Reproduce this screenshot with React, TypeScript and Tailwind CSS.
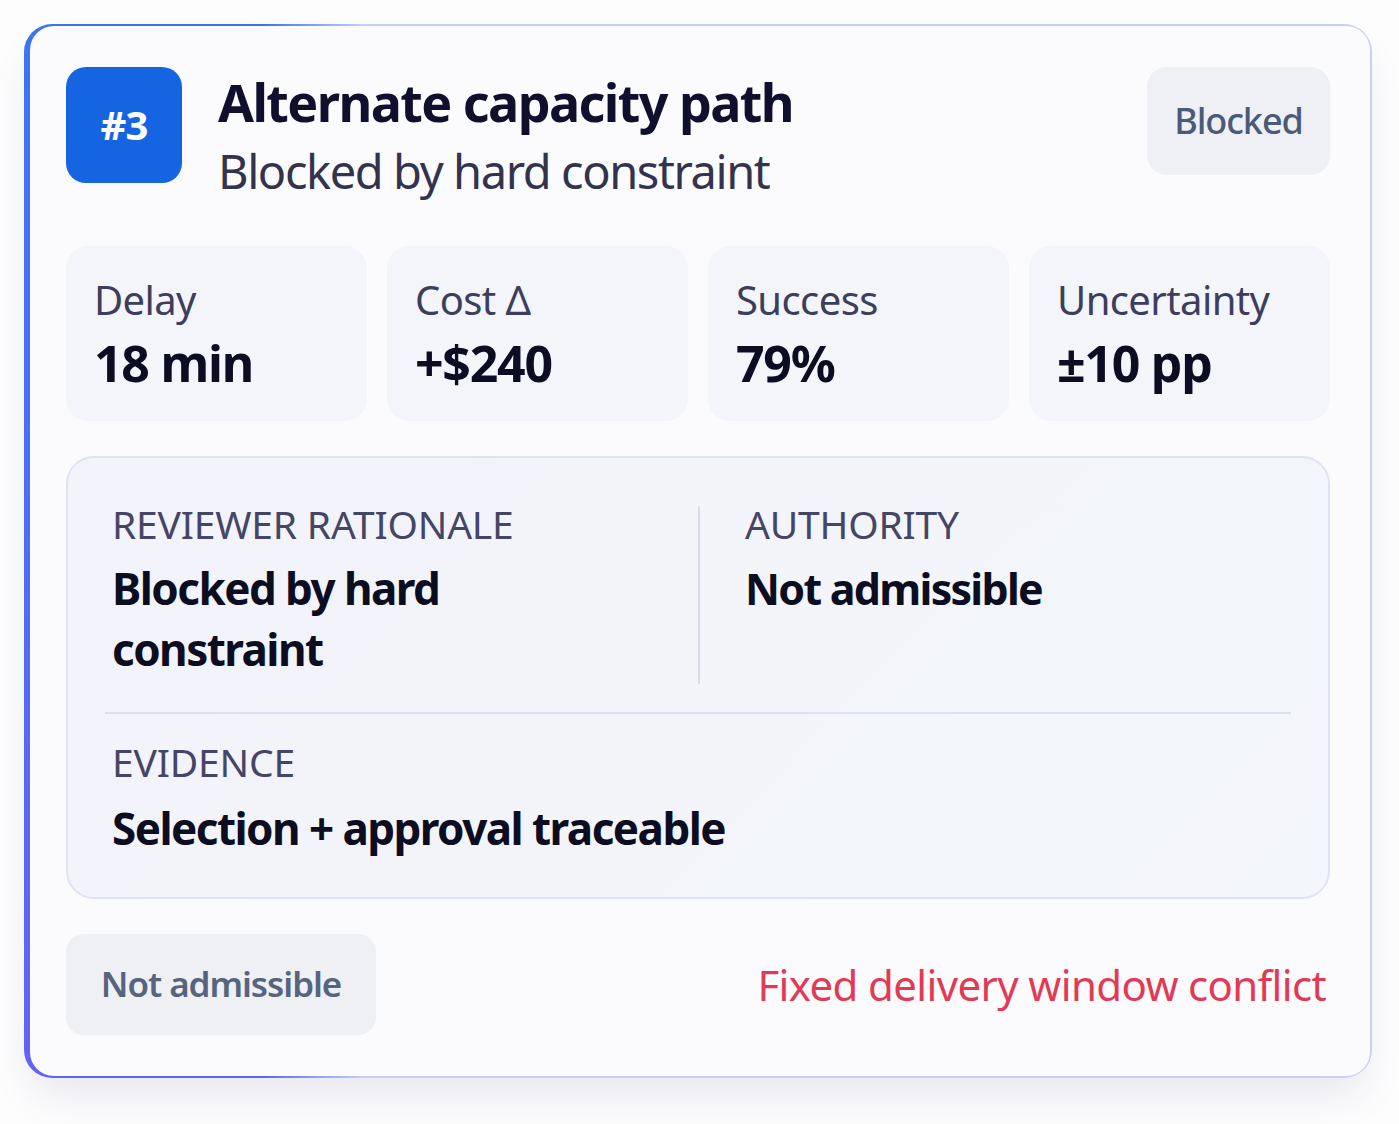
import React from "react";

const font = { fontFamily: '"Noto Sans", "Open Sans", sans-serif' };

function Metric({ label, value }: { label: string; value: string }) {
  return (
    <div className="rounded-[22px] bg-[#f3f5fb] pl-[28px] pt-[30px] pb-[28px]">
      <div className="text-[40px] leading-[48px] text-[#3d3d5c] tracking-[-0.015em]">{label}</div>
      <div className="mt-[9px] text-[50px] leading-[60px] font-bold text-[#0c0c22] tracking-[-0.025em]">{value}</div>
    </div>
  );
}

export default function App() {
  return (
    <div className="min-h-[1124px] bg-[#fdfdfe] p-[24px]" style={font}>
      <div className="w-[1348px] rounded-[28px] p-[2px] pl-[6px] bg-[linear-gradient(to_right,rgba(200,206,248,0)_0px,rgba(200,206,248,0)_240px,#c8cef8_340px,#c8cef8_100%),linear-gradient(to_bottom,#3c74f0,#6263f4)] shadow-[0_24px_40px_-8px_rgba(30,40,90,0.10)]">
        <div className="rounded-[24px] bg-[#fbfbfe] pl-[36px] pr-[40px] pt-[41px] pb-[41px]">
          {/* Header */}
          <div className="flex h-[116px] items-start">
            <div className="flex h-[116px] w-[116px] shrink-0 items-center justify-center rounded-[20px] bg-[#1565e2] text-[40px] font-bold text-white tracking-[-0.02em]">
              #3
            </div>
            <div className="ml-[36px] flex-1">
              <div className="mt-[5px] text-[52px] leading-[60px] font-bold text-[#10102e] tracking-[-0.03em]">
                Alternate capacity path
              </div>
              <div className="mt-[11px] text-[47px] leading-[56px] text-[#33334d] tracking-[-0.03em]">
                Blocked by hard constraint
              </div>
            </div>
            <div className="flex h-[108px] w-[183px] items-center justify-center rounded-[20px] bg-[#eef0f5] text-[36px] font-medium text-[#4b5a77] tracking-[-0.03em]">
              Blocked
            </div>
          </div>

          {/* Metrics */}
          <div className="mt-[63px] grid grid-cols-4 gap-[20px]">
            <Metric label="Delay" value="18 min" />
            <Metric label="Cost Δ" value="+$240" />
            <Metric label="Success" value="79%" />
            <Metric label="Uncertainty" value="±10 pp" />
          </div>

          {/* Panel */}
          <div className="mt-[35px] rounded-[28px] border-2 border-[#dfe2f6] bg-[linear-gradient(135deg,#f2f3fb,#f3f6fa)] px-[37px] pt-[48px] pb-[41px]">
            <div className="grid grid-cols-2">
              <div className="pl-[7px] pb-[4px]">
                <div className="-mt-[4px] text-[39px] leading-[44px] text-[#454565] tracking-[-0.005em]">REVIEWER RATIONALE</div>
                <div className="mt-[12px] text-[44px] leading-[61px] font-bold text-[#0d0d22] tracking-[-0.035em]">
                  Blocked by hard
                  <br />
                  constraint
                </div>
              </div>
              <div className="border-l-2 border-[#d9dcea] pl-[45px]">
                <div className="-mt-[4px] text-[39px] leading-[44px] text-[#454565] tracking-[-0.005em]">AUTHORITY</div>
                <div className="mt-[12px] text-[43px] leading-[61px] font-bold text-[#0d0d22] tracking-[-0.04em]">
                  Not admissible
                </div>
              </div>
            </div>
            <div className="mt-[28px] h-[2px] bg-[#dcdfee]" />
            <div className="pl-[7px] pt-[26px]">
              <div className="text-[39px] leading-[44px] text-[#454565] tracking-[-0.005em]">EVIDENCE</div>
              <div className="mt-[16px] text-[44px] leading-[56px] font-bold text-[#0d0d22] tracking-[-0.035em]">
                Selection + approval traceable
              </div>
            </div>
          </div>

          {/* Footer */}
          <div className="mt-[35px] flex items-center justify-between">
            <div className="flex h-[101px] w-[310px] items-center justify-center rounded-[18px] bg-[#eef0f4] text-[35px] font-semibold text-[#56657f] tracking-[-0.03em]">
              Not admissible
            </div>
            <div className="mr-[4px] text-[42px] text-[#e23a54] tracking-[-0.015em]">Fixed delivery window conflict</div>
          </div>
        </div>
      </div>
    </div>
  );
}
